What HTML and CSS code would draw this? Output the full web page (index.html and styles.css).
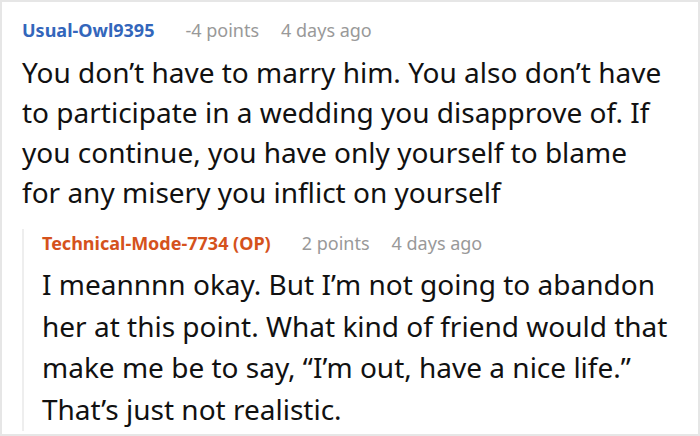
FILE: index.html
```html
<!DOCTYPE html>
<html>
<head>
<meta charset="utf-8">
<link rel="stylesheet" href="styles.css">
</head>
<body>
<div class="card">
  <div class="comment">
    <div class="meta">
      <span class="user user-blue">Usual-Owl9395</span>
      <span class="info">-4 points</span>
      <span class="info">4 days ago</span>
    </div>
    <p class="text">You don’t have to marry him. You also don’t have to participate in a wedding you disapprove of. If you continue, you have only yourself to blame for any misery you inflict on yourself</p>
  </div>
  <div class="reply">
    <div class="meta">
      <span class="user user-op">Technical-Mode-7734 (OP)</span>
      <span class="info">2 points</span>
      <span class="info">4 days ago</span>
    </div>
    <p class="text text-reply">I meannnn okay. But I’m not going to abandon<br>her at this point. What kind of friend would that<br>make me be to say, “I’m out, have a nice life.”<br>That’s just not realistic.</p>
  </div>
</div>
</body>
</html>
```
FILE: styles.css
```css
html, body { margin: 0; padding: 0; background: #fff; }
.card {
  width: 700px;
  height: 436px;
  box-sizing: border-box;
  border: 2px solid #e6e6e6;
  padding: 16px 36px 0 20px;
  font-family: "Noto Sans", "Open Sans", sans-serif;
  color: #111;
  overflow: hidden;
}
.meta {
  display: flex;
  font-size: 18px;
  line-height: 24px;
}
.user { font-weight: 700; margin-right: 31px; }
.user-blue { color: #3366bb; }
.user-op { color: #d5521c; margin-right: 31px; }
.info { color: #999; margin-right: 22px; }
.text {
  margin: 10px 0 0;
  font-size: 28px;
  line-height: 40px;
}
.reply {
  margin-top: 17px;
  padding: 2px 0 0 18px;
  border-left: 2px solid #eeeeee;
}
.text-reply {
  font-size: 28px;
  line-height: 41.7px;
  white-space: nowrap;
  margin: 9px 0 -14px;
}
```
